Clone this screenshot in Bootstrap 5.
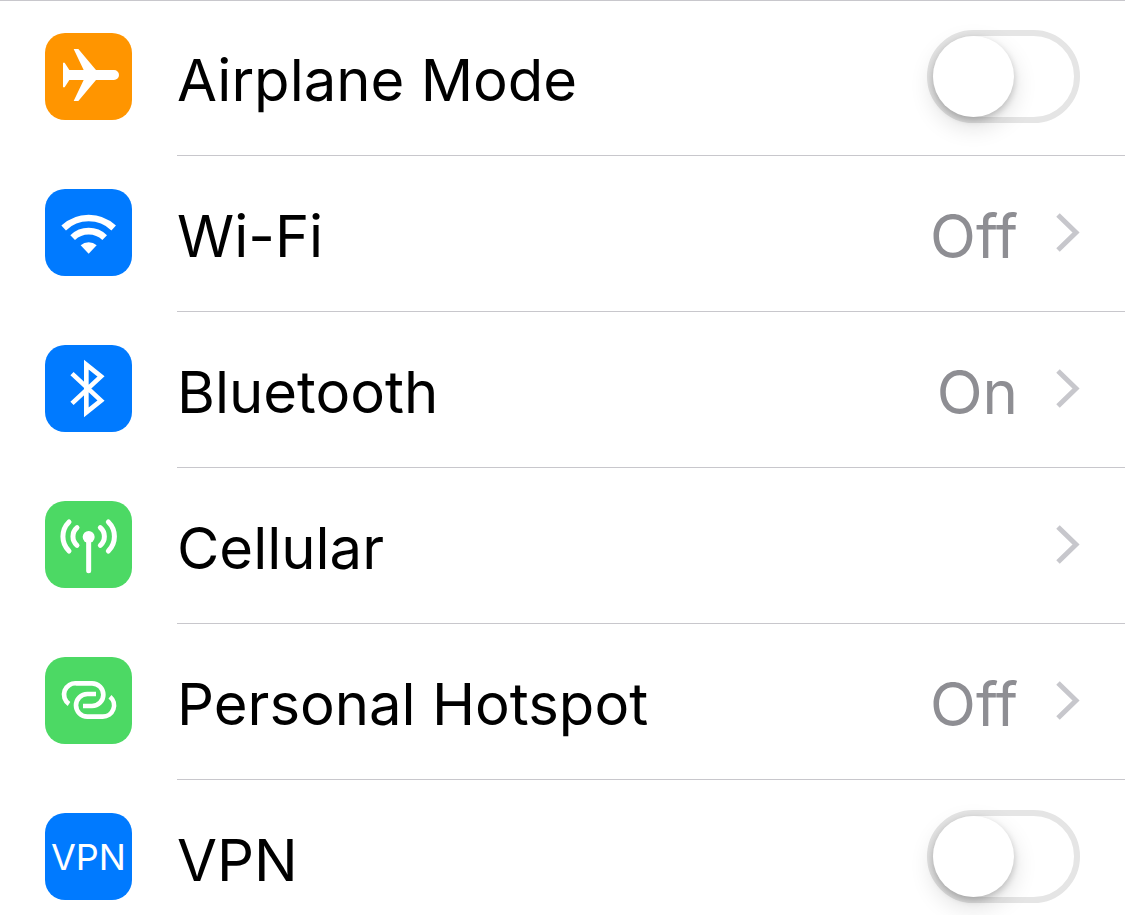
<!DOCTYPE html>
<html lang="en">
<head>
<meta charset="utf-8">
<meta name="viewport" content="width=device-width, initial-scale=1">
<title>Settings</title>
<link href="https://cdn.jsdelivr.net/npm/bootstrap@5.3.0/dist/css/bootstrap.min.css" rel="stylesheet">
<style>
  body { background: #fff; color: #000; font-family: Inter, "Liberation Sans", sans-serif; }
  .settings { border-top: 1px solid #c8c7cc; }
  .setting { color: #000; gap: 45px; padding-left: 45px; font-size: 60px; line-height: 72px; }
  .tile { width: 87px; height: 87px; margin-top: 33px; border-radius: 20px; color: #fff; }
  .tile svg { width: 100%; height: 100%; }
  .tile-orange { background: #ff9500; }
  .tile-blue { background: #007aff; }
  .tile-green { background: #4cd964; }
  .tile-text { font-size: 36px; line-height: 48px; }
  .setting-body { min-height: 156px; padding: 30px 45px 32px 0; border-bottom: 1px solid #c8c7cc; }
  .settings li:first-child .tile { margin-top: 32px; }
  .settings li:first-child .setting-body { min-height: 155px; padding-top: 29px; }
  .settings li:last-child .setting-body { min-height: 135px; padding-bottom: 12px; border-bottom: 0; }
  .setting-name, .setting-value { padding-top: 7px; }
  .setting-name { font-size: 58px; }
  .setting-value { color: #8e8e93; margin-right: 38px; }
  .chevron { width: 24px; height: 39px; }
  .toggle.form-check-input {
    width: 153px; height: 93px; margin: 0; border: 6px solid #e5e5e5; border-radius: 47px;
    background: #fff; cursor: pointer;
  }
  .toggle::before {
    content: ""; display: block; width: 81px; height: 81px; border-radius: 50%; background: #fff;
    box-shadow: 0 9px 24px rgba(0, 0, 0, .14), 0 3px 7px rgba(0, 0, 0, .2);
    transition: margin .2s;
  }
  .toggle.form-check-input:checked { background: #4cd964; border-color: #4cd964; }
  .toggle:checked::before { margin-left: 60px; }
</style>
</head>
<body>
<main>
  <ul class="settings list-unstyled mb-0">
    <li>
      <label class="setting d-flex" for="airplane">
        <span class="tile tile-orange flex-shrink-0">
          <svg class="d-block" viewBox="15 15 261 261" fill="currentColor" aria-hidden="true"><path d="M69 104H74L88 126H131L101 63H115L168 126H222A15 15 0 0 1 222 156H168L115 219H101L131 156H88L74 178H69Z"/></svg>
        </span>
        <span class="setting-body d-flex align-items-center flex-fill">
          <span class="setting-name me-auto">Airplane Mode</span>
          <input class="toggle form-check-input flex-shrink-0" type="checkbox" role="switch" id="airplane">
        </span>
      </label>
    </li>
    <li>
      <a class="setting d-flex text-decoration-none" href="#wifi">
        <span class="tile tile-blue flex-shrink-0">
          <svg class="d-block" viewBox="15 15 261 261" fill="none" stroke="currentColor" stroke-width="20" aria-hidden="true"><path d="M71 132A109 109 0 0 1 221 132M98 161A69 69 0 0 1 194 161"/><path d="M146 209L122 184A36 36 0 0 1 170 184Z" fill="currentColor" stroke="none"/></svg>
        </span>
        <span class="setting-body d-flex align-items-center flex-fill">
          <span class="setting-name me-auto">Wi-Fi</span>
          <span class="setting-value">Off</span>
          <svg class="chevron flex-shrink-0" viewBox="0 0 24 39" fill="none" stroke="#c7c7cc" stroke-width="5" aria-hidden="true"><path d="M2 2L20 19.5L2 37"/></svg>
        </span>
      </a>
    </li>
    <li>
      <a class="setting d-flex text-decoration-none" href="#bluetooth">
        <span class="tile tile-blue flex-shrink-0">
          <svg class="d-block" viewBox="15 15 261 261" fill="none" stroke="currentColor" stroke-width="14" stroke-miterlimit="8" aria-hidden="true"><path d="M96 101L183 182L139 217V74L183 109L96 190"/></svg>
        </span>
        <span class="setting-body d-flex align-items-center flex-fill">
          <span class="setting-name me-auto">Bluetooth</span>
          <span class="setting-value">On</span>
          <svg class="chevron flex-shrink-0" viewBox="0 0 24 39" fill="none" stroke="#c7c7cc" stroke-width="5" aria-hidden="true"><path d="M2 2L20 19.5L2 37"/></svg>
        </span>
      </a>
    </li>
    <li>
      <a class="setting d-flex text-decoration-none" href="#cellular">
        <span class="tile tile-green flex-shrink-0">
          <svg class="d-block" viewBox="15 15 261 261" fill="none" stroke="currentColor" stroke-width="15" stroke-linecap="round" aria-hidden="true"><circle cx="146" cy="123" r="18" fill="currentColor" stroke="none"/><path d="M146 123V224"/><path d="M87 78A61 61 0 0 0 87 165M111 95A35 35 0 0 0 111 148M205 78A61 61 0 0 1 205 165M181 95A35 35 0 0 1 181 148"/></svg>
        </span>
        <span class="setting-body d-flex align-items-center flex-fill">
          <span class="setting-name me-auto">Cellular</span>
          <svg class="chevron flex-shrink-0" viewBox="0 0 24 39" fill="none" stroke="#c7c7cc" stroke-width="5" aria-hidden="true"><path d="M2 2L20 19.5L2 37"/></svg>
        </span>
      </a>
    </li>
    <li>
      <a class="setting d-flex text-decoration-none" href="#hotspot">
        <span class="tile tile-green flex-shrink-0">
          <svg class="d-block" viewBox="15 15 261 261" fill="none" stroke="currentColor" stroke-width="14" aria-hidden="true"><path d="M87 156A34 34 0 0 1 110 94H156A34 34 0 0 1 156 162H129M168 126H142A34 34 0 0 0 142 194H188A34 34 0 0 0 210 134"/></svg>
        </span>
        <span class="setting-body d-flex align-items-center flex-fill">
          <span class="setting-name me-auto">Personal Hotspot</span>
          <span class="setting-value">Off</span>
          <svg class="chevron flex-shrink-0" viewBox="0 0 24 39" fill="none" stroke="#c7c7cc" stroke-width="5" aria-hidden="true"><path d="M2 2L20 19.5L2 37"/></svg>
        </span>
      </a>
    </li>
    <li>
      <label class="setting d-flex" for="vpn">
        <span class="tile tile-blue tile-text flex-shrink-0 d-flex align-items-center justify-content-center" aria-hidden="true">VPN</span>
        <span class="setting-body d-flex align-items-center flex-fill">
          <span class="setting-name me-auto">VPN</span>
          <input class="toggle form-check-input flex-shrink-0" type="checkbox" role="switch" id="vpn">
        </span>
      </label>
    </li>
  </ul>
</main>
<script src="https://cdn.jsdelivr.net/npm/bootstrap@5.3.0/dist/js/bootstrap.bundle.min.js"></script>
</body>
</html>
